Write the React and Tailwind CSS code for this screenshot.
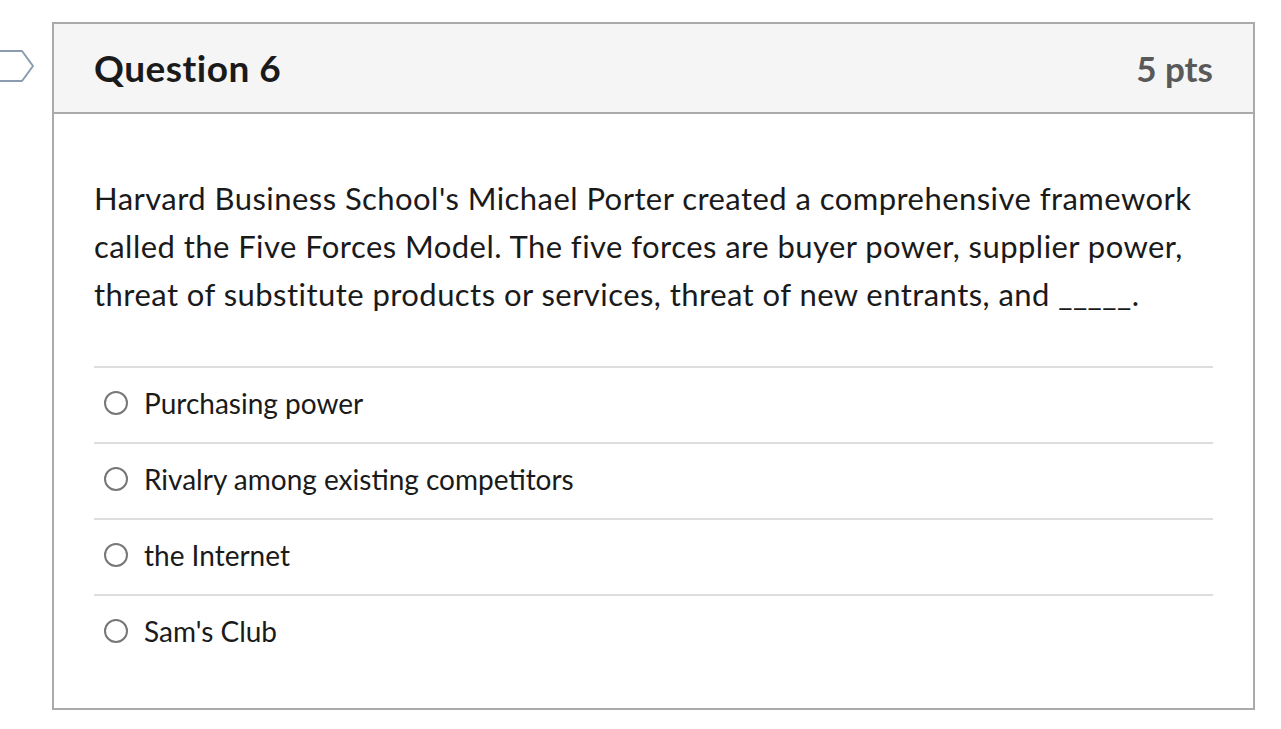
import React from 'react'

const options = ['Purchasing power', 'Rivalry among existing competitors', 'the Internet', "Sam's Club"]

function Tab() {
  return (
    <svg width="52" height="40" viewBox="0 0 52 40" className="mt-[26px] shrink-0">
      <path d="M-2 3 H22 L33 18 L22 33 H-2" fill="white" stroke="#8b9bb0" strokeWidth="2" strokeLinejoin="round" />
    </svg>
  )
}

export default function App() {
  return (
    <div className="flex items-start pt-[22px] bg-white min-h-screen" style={{ fontFamily: 'Lato, "Noto Sans", sans-serif' }}>
      <Tab />
      <div className="w-[1203px] border-2 border-[#aaaaaa] text-[#1a1a1a]">
        <div className="h-[90px] bg-[#f5f5f5] border-b-2 border-[#aaaaaa] flex items-center justify-between px-[40px]">
          <h2 className="text-[37px] font-bold tracking-[0.5px]">Question 6</h2>
          <span className="text-[35px] font-bold text-[#595959]">5 pts</span>
        </div>
        <div className="px-[40px] pt-[60px] pb-[38px]">
          <p className="text-[31px] leading-[48px] tracking-[0.45px] mb-[48px]">
            Harvard Business School's Michael Porter created a comprehensive framework called the Five Forces Model. The five forces are buyer power, supplier power, threat of substitute products or services, threat of new entrants, and _____.
          </p>
          {options.map(o => (
            <label key={o} className="flex items-center h-[76px] border-t-2 border-[#dddddd] pl-[10px] pb-[4px]">
              <span className="w-[24px] h-[24px] rounded-full border-2 border-[#777777] bg-white shrink-0" />
              <span className="ml-[16px] text-[28px]">{o}</span>
            </label>
          ))}
        </div>
      </div>
    </div>
  )
}
